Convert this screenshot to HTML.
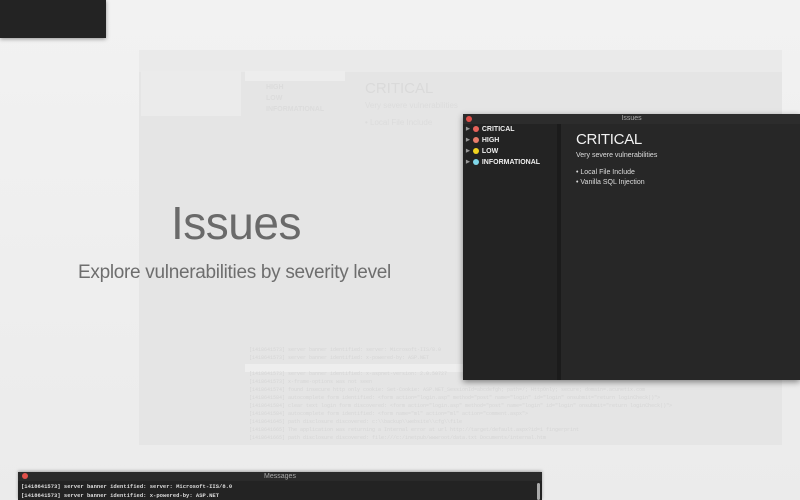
<!DOCTYPE html>
<html><head><meta charset="utf-8"><style>
body{margin:0;width:800px;height:500px;overflow:hidden;position:relative;background:linear-gradient(180deg,#f2f2f2,#ebebeb);font-family:"Liberation Sans",sans-serif}
.abs{position:absolute}
.mono{font-family:"Liberation Mono",monospace}
.d{display:inline-block;width:6px;height:6px;border-radius:50%;margin:0 3px 0 3px;vertical-align:-1px}
.t{color:#999;font-size:5px;vertical-align:1px}
</style></head><body>
<div class="abs" style="left:0;top:0;width:106px;height:38px;background:#232323;box-shadow:0 1px 4px rgba(0,0,0,.4)"></div>
<!-- faded window -->
<div class="abs" style="left:139px;top:50px;width:643px;height:395px;background:#e5e5e5"></div>
<div class="abs" style="left:139px;top:50px;width:643px;height:22px;background:#eaeaea"></div>
<div class="abs" style="left:141px;top:71px;width:100px;height:45px;background:#ebebeb"></div>
<div class="abs" style="left:245px;top:71px;width:100px;height:10px;background:#ededed"></div>
<div class="abs" style="left:266px;top:82px;color:#dcdcdc;font-size:7px;font-weight:bold;line-height:11px">HIGH<br>LOW<br>INFORMATIONAL</div>
<div class="abs" style="left:365px;top:80px;color:#dadada;font-size:15px">CRITICAL</div>
<div class="abs" style="left:365px;top:101px;color:#dcdcdc;font-size:8px">Very severe vulnerabilities</div>
<div class="abs" style="left:365px;top:118px;color:#dcdcdc;font-size:8px">• Local File Include</div>
<div class="abs" style="left:245px;top:364px;width:300px;height:8px;background:#eeeeee"></div>
<div class="abs mono" style="left:249px;top:346px;color:#d6d6d6;font-size:5px;line-height:8px;white-space:pre">[1418641573] server banner identified: server: Microsoft-IIS/8.0
[1418641573] server banner identified: x-powered-by: ASP.NET

[1418641573] server banner identified: x-aspnet-version: 2.0.50727
[1418641573] x-frame-options was not seen
[1418641574] found insecure http only cookie: Set-Cookie: ASP.NET_SessionId=abcdefgh; path=/; HttpOnly; secure; domain=.acunetix.com
[1418641584] autocomplete form identified: &lt;form action="login.asp" method="post" name="login" id="login" onsubmit="return loginCheck()"&gt;
[1418641584] clear text login form discovered: &lt;form action="login.asp" method="post" name="login" id="login" onsubmit="return loginCheck()"&gt;
[1418641584] autocomplete form identified: &lt;form name="ml" action="ml" action="comment.aspx"&gt;
[1418641645] path disclosure discovered: c:\\backup\\website\\cfg\\file
[1418641665] The application was returning a Internal error at url http://target/default.aspx?id=1 fingerprint
[1418641665] path disclosure discovered: file:///c:/inetpub/wwwroot/data.txt Documents/internal.htm</div>
<!-- hero text -->
<div class="abs" style="left:171px;top:196px;font-size:46px;color:#6a6a6a;font-weight:300;letter-spacing:-0.5px">Issues</div>
<div class="abs" style="left:78px;top:262px;font-size:19px;color:#6e6e6e;letter-spacing:-0.3px">Explore vulnerabilities by severity level</div>
<!-- issues window -->
<div class="abs" style="left:463px;top:114px;width:337px;height:266px;background:#232323;box-shadow:0 2px 6px rgba(0,0,0,.45)">
 <div class="abs" style="left:0;top:0;width:337px;height:10px;background:#2c2c2c;color:#aaa;font-size:7px;text-align:center;line-height:10px">Issues</div>
 <div class="abs" style="left:3px;top:2px;width:6px;height:6px;border-radius:50%;background:#e0504a"></div>
 <div class="abs" style="left:94px;top:10px;width:4px;height:256px;background:#1b1b1b"></div>
 <div class="abs" style="left:98px;top:10px;width:239px;height:256px;background:#272727"></div>
 <div class="abs" style="left:3px;top:10px;font-size:7px;font-weight:bold;color:#eee;line-height:10px">
  <div><span class="t">▶</span><span class="d" style="background:#e8625a"></span>CRITICAL</div>
  <div><span class="t">▶</span><span class="d" style="background:#e87c6a"></span>HIGH</div>
  <div><span class="t">▶</span><span class="d" style="background:#f0d320"></span>LOW</div>
  <div><span class="t">▶</span><span class="d" style="background:#7fd6e8"></span>INFORMATIONAL</div>
 </div>
 <div class="abs" style="left:113px;top:17px;font-size:15px;color:#f2f2f2;letter-spacing:-0.3px">CRITICAL</div>
 <div class="abs" style="left:113px;top:38px;font-size:7px;color:#ddd">Very severe vulnerabilities</div>
 <div class="abs" style="left:113px;top:54px;font-size:7px;color:#ddd;line-height:10px">• Local File Include<br>• Vanilla SQL Injection</div>
</div>
<!-- messages window -->
<div class="abs" style="left:18px;top:472px;width:524px;height:28px;background:#232323;box-shadow:0 -1px 3px rgba(0,0,0,.3)">
 <div class="abs" style="left:0;top:0;width:524px;height:9px;background:#2a2a2a;color:#aaa;font-size:7px;text-align:center;line-height:9px">Messages</div>
 <div class="abs" style="left:4px;top:1px;width:6px;height:6px;border-radius:50%;background:#e0504a"></div>
 <div class="abs mono" style="left:3px;top:10px;color:#ddd;font-size:5.5px;line-height:9px;font-weight:bold;white-space:pre">[1418641573] server banner identified: server: Microsoft-IIS/8.0
[1418641573] server banner identified: x-powered-by: ASP.NET</div>
 <div class="abs" style="left:519px;top:11px;width:3px;height:17px;background:#aaa;border-radius:2px"></div>
</div>
</body></html>
